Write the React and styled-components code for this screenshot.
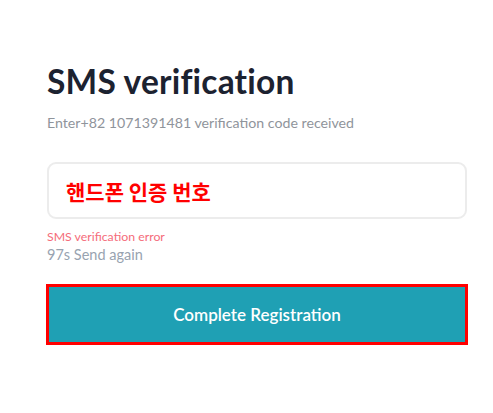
import styled, { createGlobalStyle } from 'styled-components';

const GlobalStyle = createGlobalStyle`
	html, body {
		margin: 0;
		padding: 0;
		background: #ffffff;
	}
	body {
		font-family: Lato, "Noto Sans", "Noto Sans CJK KR", sans-serif;
	}
`;

const App = () => {
	return (
		<>
			<GlobalStyle />
			<Wrapper>
				<Title>SMS verification</Title>
				<Subtitle>Enter+82 1071391481 verification code received</Subtitle>
				<InputBox>
					<CodeInput placeholder='핸드폰 인증 번호' />
				</InputBox>
				<ErrorText>SMS verification error</ErrorText>
				<Resend>97s Send again</Resend>
				<SubmitButton type='button'>Complete Registration</SubmitButton>
			</Wrapper>
		</>
	);
};

const Wrapper = styled.main`
	width: 420px;
	padding: 61px 0 0 47px;
	display: flex;
	flex-direction: column;
`;

const Title = styled.h1`
	margin: 0;
	font-size: 33.5px;
	line-height: 40px;
	font-weight: 700;
	color: #1c2230;
	letter-spacing: 0.2px;
`;

const Subtitle = styled.p`
	margin: 12px 0 0;
	font-size: 14.2px;
	line-height: 20px;
	color: #8f949b;
`;

const InputBox = styled.div`
	margin-top: 29px;
	height: 57px;
	box-sizing: border-box;
	border: 2px solid #ececec;
	border-radius: 9px;
	display: flex;
	align-items: center;
	padding: 0 17px;
`;

const CodeInput = styled.input`
	border: none;
	outline: none;
	width: 100%;
	padding: 0;
	font-family: "Noto Sans CJK KR", sans-serif;
	font-size: 21px;
	font-weight: 700;
	color: #ff0000;
	background: transparent;
	&::placeholder {
		color: #ff0000;
		opacity: 1;
	}
`;

const ErrorText = styled.div`
	margin-top: 10px;
	font-size: 12.3px;
	line-height: 16px;
	color: #f56c7a;
`;

const Resend = styled.div`
	margin-top: 1px;
	font-size: 14.5px;
	line-height: 18px;
	color: #98a3b0;
`;

const SubmitButton = styled.button`
	margin-top: 20px;
	margin-left: -1px;
	width: 422px;
	height: 61px;
	box-sizing: border-box;
	border: 3px solid #ff0000;
	background: #1fa0b4;
	color: #ffffff;
	font-family: Lato, "Noto Sans", sans-serif;
	font-size: 17px;
	font-weight: 600;
	cursor: pointer;
`;

export default App;
